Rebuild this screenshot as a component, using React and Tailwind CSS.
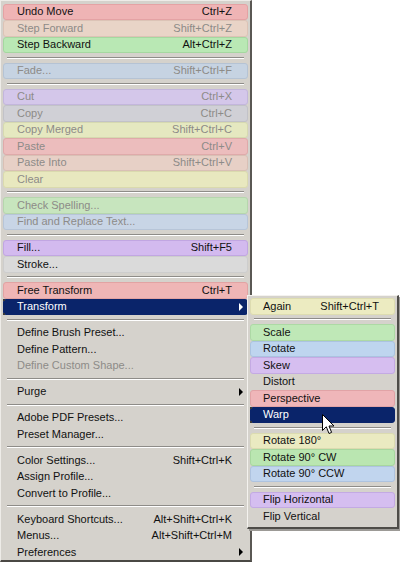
import React from "react";

const editMenu = [
  [
    { label: "Undo Move", keys: "Ctrl+Z", tint: "bg-[#efb4b5] border-[#e4a2a4]" },
    { label: "Step Forward", keys: "Shift+Ctrl+Z", tint: "bg-[#e9d4c7] border-[#dcc3b6]", off: true },
    { label: "Step Backward", keys: "Alt+Ctrl+Z", tint: "bg-[#b9e8b4] border-[#a5d8a0]" },
  ],
  [{ label: "Fade...", keys: "Shift+Ctrl+F", tint: "bg-[#c6d3e2] border-[#b5c3d4]", off: true }],
  [
    { label: "Cut", keys: "Ctrl+X", tint: "bg-[#d4c7ea] border-[#c3b6dc]", off: true },
    { label: "Copy", keys: "Ctrl+C", tint: "bg-[#d0d0d6] border-[#c2c2c8]", off: true },
    { label: "Copy Merged", keys: "Shift+Ctrl+C", tint: "bg-[#e5e8c0] border-[#d6d9b0]", off: true },
    { label: "Paste", keys: "Ctrl+V", tint: "bg-[#ecbdbd] border-[#dfaaaa]", off: true },
    { label: "Paste Into", keys: "Shift+Ctrl+V", tint: "bg-[#e7d0c6] border-[#d9c0b5]", off: true },
    { label: "Clear", tint: "bg-[#e8e8bf] border-[#dadaae]", off: true },
  ],
  [
    { label: "Check Spelling...", tint: "bg-[#c7e5be] border-[#b6d6ad]", off: true },
    { label: "Find and Replace Text...", tint: "bg-[#c8d5e6] border-[#b7c5d8]", off: true },
  ],
  [
    { label: "Fill...", keys: "Shift+F5", tint: "bg-[#d3baef] border-[#c1a6e2]" },
    { label: "Stroke...", tint: "bg-[#dadada] border-[#cdcdcd]" },
  ],
  [
    { label: "Free Transform", keys: "Ctrl+T", tint: "bg-[#efb6b6] border-[#e2a3a3]" },
    { label: "Transform", sub: true, active: true },
  ],
  [
    { label: "Define Brush Preset..." },
    { label: "Define Pattern..." },
    { label: "Define Custom Shape...", off: true },
  ],
  [{ label: "Purge", sub: true }],
  [{ label: "Adobe PDF Presets..." }, { label: "Preset Manager..." }],
  [
    { label: "Color Settings...", keys: "Shift+Ctrl+K" },
    { label: "Assign Profile..." },
    { label: "Convert to Profile..." },
  ],
  [
    { label: "Keyboard Shortcuts...", keys: "Alt+Shift+Ctrl+K" },
    { label: "Menus...", keys: "Alt+Shift+Ctrl+M" },
    { label: "Preferences", sub: true },
  ],
];

const transformMenu = [
  [{ label: "Again", keys: "Shift+Ctrl+T", tint: "bg-[#ecebc1] border-[#dddcb0]" }],
  [
    { label: "Scale", tint: "bg-[#bfe8b7] border-[#add9a5]" },
    { label: "Rotate", tint: "bg-[#bed5ef] border-[#abc3e0]" },
    { label: "Skew", tint: "bg-[#d6bef0] border-[#c4aae3]" },
    { label: "Distort" },
    { label: "Perspective", tint: "bg-[#efb6b9] border-[#e1a3a6]" },
    { label: "Warp", active: true },
  ],
  [
    { label: "Rotate 180°", tint: "bg-[#eaeac1] border-[#dbdbb0]" },
    { label: "Rotate 90° CW", tint: "bg-[#bae6b1] border-[#a8d79f]" },
    { label: "Rotate 90° CCW", tint: "bg-[#c1d5ee] border-[#aec3df]" },
  ],
  [
    { label: "Flip Horizontal", tint: "bg-[#d5bef0] border-[#c3aae3]" },
    { label: "Flip Vertical" },
  ],
];

function Separator() {
  return (
    <div className="h-[9.5px] flex items-center px-[4px]">
      <div className="w-full border-t border-t-[#8e8c88] border-b border-b-white" />
    </div>
  );
}

function Arrow({ light }) {
  return (
    <span
      className={
        "block w-0 h-0 border-y-[4px] border-y-transparent border-l-[4px] " +
        (light ? "border-l-white" : "border-l-black")
      }
    />
  );
}

function Item({ item, padL, padR, arrowSlot }) {
  let look = "border-transparent";
  if (item.active) look = "bg-[#0a246a] border-[#0a246a] text-white";
  else if (item.tint) look = item.tint;
  const color = item.active ? "text-white" : item.off ? "text-[#8d8b88]" : "text-[#111]";

  return (
    <div className={"relative h-[16.5px] rounded-[3px] border flex items-center " + look + " " + color}>
      {item.active && (
        <>
          <span className="absolute -left-[1px] -top-[1px] w-[2px] h-[2px] bg-[#3a3a3a]" />
          <span className="absolute -left-[1px] -bottom-[1px] w-[2px] h-[2px] bg-[#3a3a3a]" />
        </>
      )}
      <span className={"flex-1 whitespace-nowrap " + padL}>{item.label}</span>
      {item.keys && <span className={"whitespace-nowrap " + padR}>{item.keys}</span>}
      {arrowSlot && (
        <span className="w-[14px] flex justify-start pl-[6px]">
          {item.sub && <Arrow light={item.active} />}
        </span>
      )}
    </div>
  );
}

function Menu({ groups, padL, padR, arrowSlot, inset }) {
  return (
    <div className={"flex flex-col " + inset}>
      {groups.map((group, gi) => (
        <React.Fragment key={gi}>
          {gi > 0 && <Separator />}
          {group.map((item) => (
            <Item key={item.label} item={item} padL={padL} padR={padR} arrowSlot={arrowSlot} />
          ))}
        </React.Fragment>
      ))}
    </div>
  );
}

function Cursor() {
  return (
    <svg className="absolute left-[322px] top-[414px]" width="14" height="22" viewBox="0 0 14 22">
      <path
        d="M0.5 0.5 L0.5 16.5 L4.3 12.8 L7 19.5 L9.6 18.4 L7 12 L12 12 Z"
        fill="white"
        stroke="black"
        strokeWidth="1"
        strokeLinejoin="miter"
      />
    </svg>
  );
}

export default function App() {
  return (
    <div
      className="relative w-[400px] h-[562px] bg-white overflow-hidden text-[11px] leading-none"
      style={{ fontFamily: '"Liberation Sans", Arial, sans-serif' }}
    >
      {/* Edit menu */}
      <div className="w-[252px] h-[562px] bg-[#d5d2cc] border-t border-l border-t-[#eeece8] border-l-[#eeece8] border-r-2 border-r-[#5a5854] border-b-2 border-b-[#4a4844] pt-[2.5px]">
        <Menu groups={editMenu} padL="pl-[13px]" padR="pr-[1px]" arrowSlot inset="px-[2px]" />
      </div>

      {/* Transform submenu */}
      <div className="absolute left-[247px] top-[295px] w-[152px] bg-[#d5d2cc] border-t border-l border-t-[#f4f2ee] border-l-[#f4f2ee] border-r-2 border-r-[#4e4c48] border-b-2 border-b-[#4e4c48] pt-[2px] pb-[2px] shadow-[2px_2px_0_#9c9a96]">
        <Menu groups={transformMenu} padL="pl-[12px]" padR="pr-[15px]" inset="px-[2px]" />
      </div>

      <Cursor />
    </div>
  );
}
